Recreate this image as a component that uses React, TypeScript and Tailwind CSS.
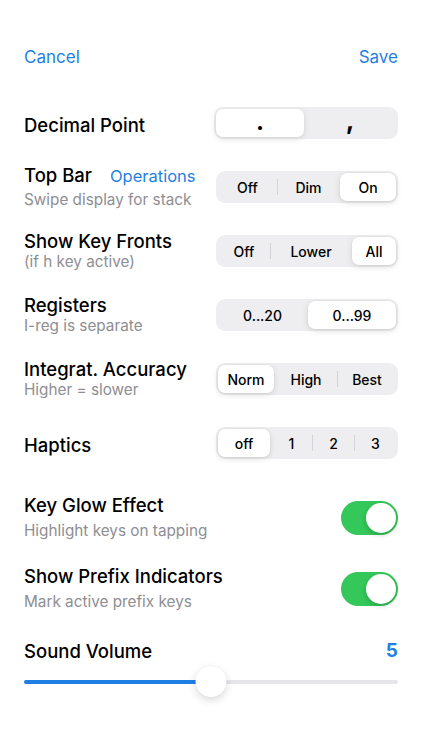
import React from "react";

type Seg = { label: string; w: string };

function Segmented({
  options,
  selected,
  width = "w-[182px]",
  textClass = "text-[14px] font-medium",
}: {
  options: Seg[];
  selected: number;
  width?: string;
  textClass?: string;
}) {
  return (
    <div className={`${width} h-[32px] bg-[#eeeef0] rounded-[9px] p-[2px] flex items-stretch`}>
      {options.map((o, i) => {
        const showSep = i > 0 && i !== selected && i - 1 !== selected;
        return (
          <React.Fragment key={o.label}>
            {i > 0 && (
              <div className="flex items-center">
                <div className={`w-px h-[16px] ${showSep ? "bg-[#d4d4d8]" : "bg-transparent"}`} />
              </div>
            )}
            <div
              className={`${o.w} flex items-center justify-center text-black ${textClass} ${
                i === selected ? "bg-white rounded-[7px] shadow-[0_2px_6px_rgba(0,0,0,0.12),0_0_0_0.5px_rgba(0,0,0,0.04)]" : ""
              }`}
            >
              {o.label}
            </div>
          </React.Fragment>
        );
      })}
    </div>
  );
}

function Row({
  title,
  sub,
  extra,
  children,
}: {
  title: string;
  sub?: string;
  extra?: React.ReactNode;
  children: React.ReactNode;
}) {
  return (
    <div className="h-[64px] flex items-center justify-between">
      <div className={`flex flex-col ${sub ? "" : "pt-[3px]"}`}>
        <div className="flex items-baseline gap-[18px]">
          <span className="text-[18.5px] font-medium text-black leading-[20px]">{title}</span>
          {extra}
        </div>
        {sub && <span className="text-[15.3px] text-[#8e8e93] leading-[21px]">{sub}</span>}
      </div>
      {children}
    </div>
  );
}

function Toggle() {
  return (
    <div className="w-[57px] h-[34px] rounded-full bg-[#34c759] p-[2px] flex justify-end">
      <div className="w-[30px] h-[30px] rounded-full bg-white shadow-[0_2px_5px_rgba(0,0,0,0.2)]" />
    </div>
  );
}

function ToggleRow({ title, sub }: { title: string; sub: string }) {
  return (
    <div className="h-[71px] flex items-center justify-between">
      <div className="flex flex-col gap-[5px]">
        <span className="text-[18.5px] font-medium text-black leading-[22px]">{title}</span>
        <span className="text-[15.3px] text-[#8e8e93] leading-[20px]">{sub}</span>
      </div>
      <Toggle />
    </div>
  );
}

export default function App() {
  return (
    <div className="w-[422px] h-[750px] bg-white px-6 font-['Inter','Liberation_Sans',sans-serif] overflow-hidden">
      {/* Nav */}
      <div className="h-[40px] mt-[38px] flex items-center justify-between text-[17px] text-[#1f7fe5]">
        <span>Cancel</span>
        <span>Save</span>
      </div>

      <div className="mt-[13px] flex flex-col">
        <Row title="Decimal Point">
          <div className="w-[184px] h-[32px] bg-[#eeeef0] rounded-[9px] p-[2px] flex">
            <div className="w-[88px] flex items-center justify-center bg-white rounded-[7px] shadow-[0_2px_6px_rgba(0,0,0,0.12)] text-[24px] font-bold leading-none">
              <span className="pb-[2px]">.</span>
            </div>
            <div className="flex-1 flex items-center justify-center text-[26px] font-bold leading-none">
              <span className="pb-[6px]">,</span>
            </div>
          </div>
        </Row>

        <Row
          title="Top Bar"
          sub="Swipe display for stack"
          extra={<span className="text-[16.5px] text-[#1f7fe5]">Operations</span>}
        >
          <Segmented
            selected={2}
            options={[
              { label: "Off", w: "w-[59px]" },
              { label: "Dim", w: "w-[61px]" },
              { label: "On", w: "w-[56px]" },
            ]}
          />
        </Row>

        <Row title="Show Key Fronts" sub="(if h key active)">
          <Segmented
            selected={2}
            options={[
              { label: "Off", w: "w-[52px]" },
              { label: "Lower", w: "w-[80px]" },
              { label: "All", w: "w-[44px]" },
            ]}
          />
        </Row>

        <Row title="Registers" sub="I-reg is separate">
          <Segmented
            selected={1}
            options={[
              { label: "0...20", w: "w-[89px]" },
              { label: "0...99", w: "w-[88px]" },
            ]}
          />
        </Row>

        <Row title="Integrat. Accuracy" sub="Higher = slower">
          <Segmented
            selected={0}
            options={[
              { label: "Norm", w: "w-[56px]" },
              { label: "High", w: "w-[62px]" },
              { label: "Best", w: "w-[58px]" },
            ]}
          />
        </Row>

        <Row title="Haptics">
          <Segmented
            selected={0}
            options={[
              { label: "off", w: "w-[52px]" },
              { label: "1", w: "w-[41px]" },
              { label: "2", w: "w-[41px]" },
              { label: "3", w: "w-[41px]" },
            ]}
          />
        </Row>

        <div className="mt-[7px]">
          <ToggleRow title="Key Glow Effect" sub="Highlight keys on tapping" />
          <ToggleRow title="Show Prefix Indicators" sub="Mark active prefix keys" />
        </div>

        {/* Sound volume */}
        <div className="mt-[16px] flex items-center justify-between">
          <span className="text-[18.5px] font-medium text-black leading-[22px]">Sound Volume</span>
          <span className="text-[19px] font-bold text-[#1f7fe5] leading-[22px]">5</span>
        </div>
        <div className="relative mt-[4px] h-[31px] flex items-center">
          <div className="w-full h-[4px] rounded-full bg-[#e5e5ea] flex">
            <div className="w-1/2 h-full rounded-full bg-[#1f7fe5]" />
          </div>
          <div className="absolute left-1/2 top-0 -translate-x-1/2 w-[31px] h-[31px] rounded-full bg-white shadow-[0_3px_8px_rgba(0,0,0,0.15),0_0_0_0.5px_rgba(0,0,0,0.04)]" />
        </div>
      </div>
    </div>
  );
}
